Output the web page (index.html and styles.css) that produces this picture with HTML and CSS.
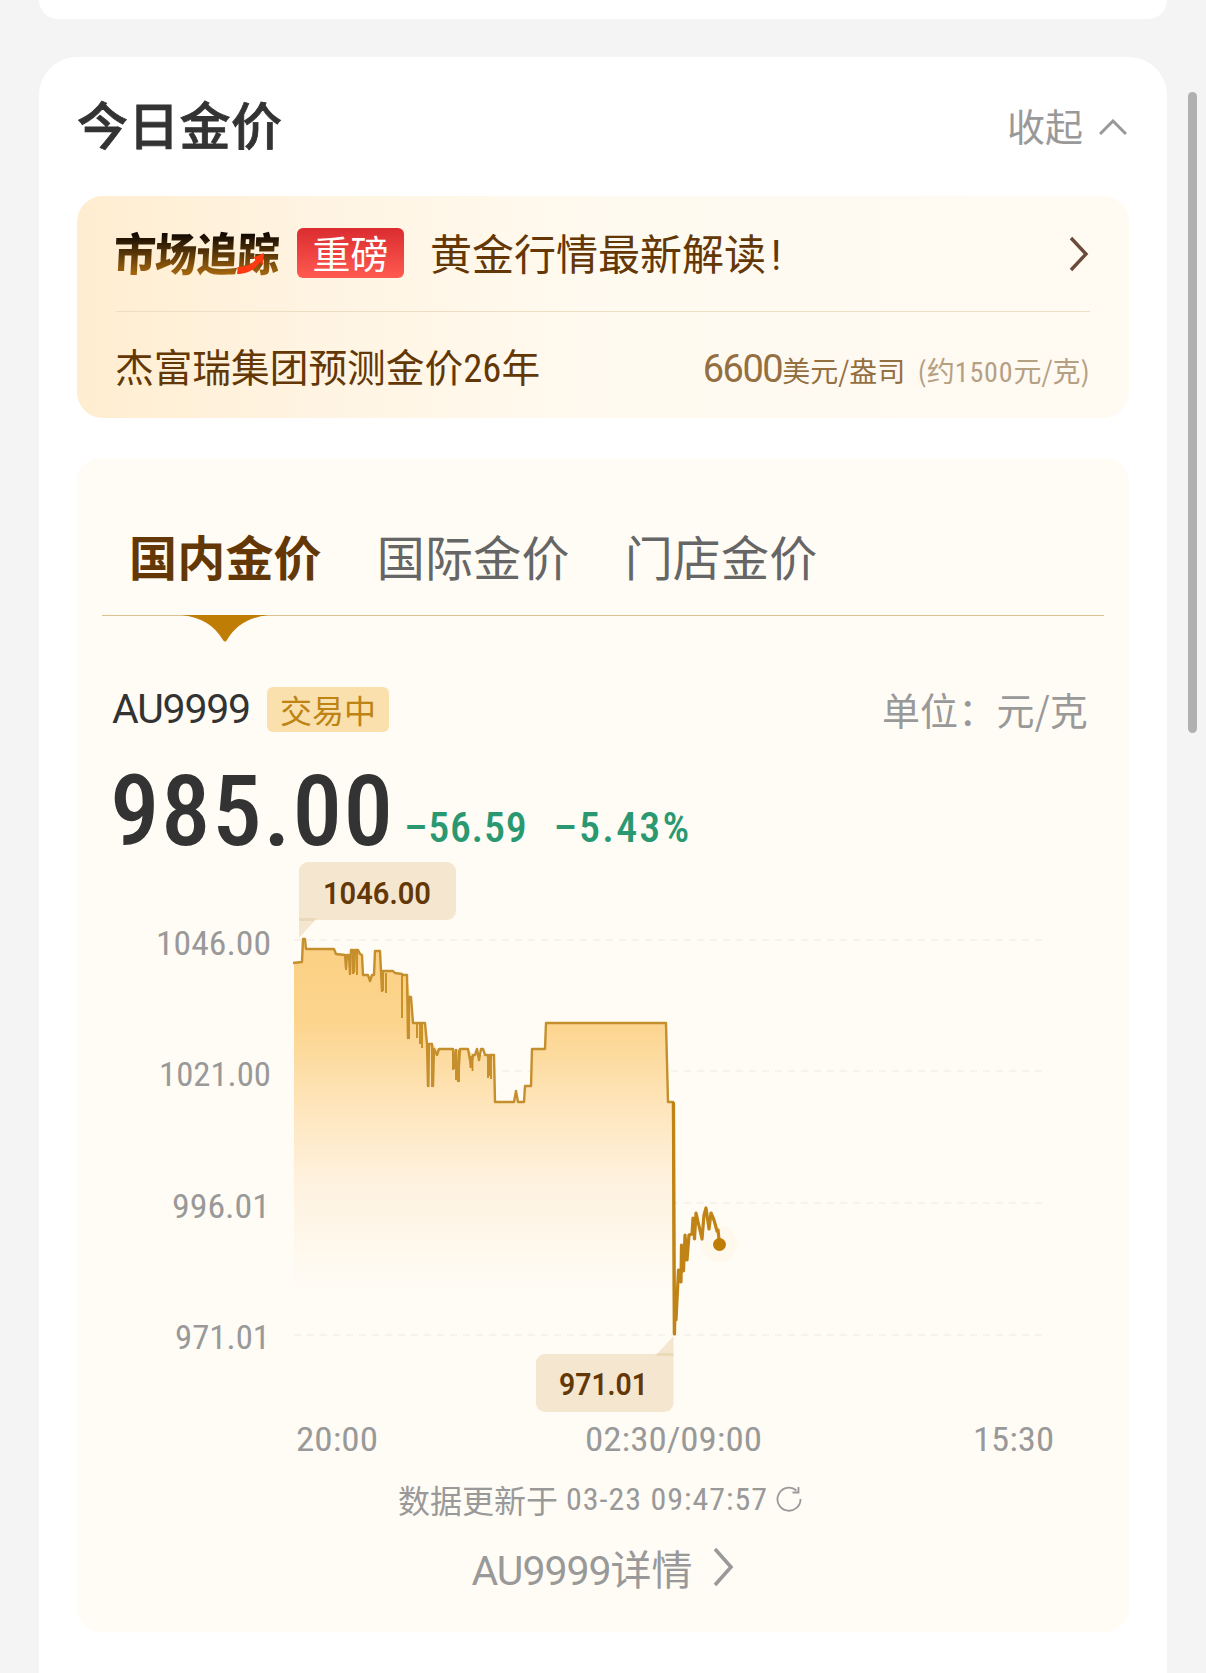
FILE: index.html
```html
<!DOCTYPE html>
<html lang="zh-CN">
<head>
  <meta charset="UTF-8" />
  <meta name="viewport" content="width=device-width, initial-scale=1.0" />
  <title>今日金价</title>
  <link rel="stylesheet" href="styles.css">
</head>
<body>
  <div class="prev-card"></div>
  <div class="card">
    <div class="card-head">
      <h2>今日金价</h2>
      <div class="fold">
        <span>收起</span>
        <svg width="28" height="16" viewBox="0 0 28 16" fill="none" stroke="#999" stroke-width="3"><path d="M1 15L14 2l13 13"/></svg>
      </div>
    </div>

    <div class="news">
      <div class="news-top">
        <div class="logo">
          <span class="logo-text">市场追踪</span>
          <svg class="logo-arrow" width="28" height="22" viewBox="0 0 28 22"><path d="M1 14C9 14 16 11 19 6l-4-1L27 0l-1 12-3-3C18 17 10 21 0 21z" fill="#ff3a12"/></svg>
        </div>
        <span class="hot">重磅</span>
        <span class="news-title">黄金行情最新解读<span class="num">!</span></span>
        <svg class="news-more" width="20" height="36" viewBox="0 0 20 36" fill="none" stroke="#6b4a3a" stroke-width="3.4"><path d="M2 2l15 16L2 34"/></svg>
      </div>
      <div class="news-bottom">
        <span class="forecast">杰富瑞集团预测金价<span class="num">26</span>年</span>
        <span class="target"><span class="num">6600</span>美元/盎司</span>
        <span class="approx">(约<span class="num">1500</span>元/克)</span>
      </div>
    </div>

    <div class="panel">
      <div class="tabs">
        <span class="tab active">国内金价</span>
        <span class="tab">国际金价</span>
        <span class="tab">门店金价</span>
        <svg class="notch" width="86" height="27" viewBox="0 0 86 27"><path d="M0 0h86C66 3 54 10 45 25q-2 3-4 0C32 10 20 3 0 0z" fill="#bf7d06"/></svg>
      </div>
      <div class="symbol-row">
        <span class="symbol num">AU9999</span>
        <span class="status">交易中</span>
        <span class="unit">单位：元/克</span>
      </div>
      <div class="price-row">
        <span class="price num">985.00</span>
        <span class="change num">–56.59</span>
        <span class="change percent num">–5.43%</span>
      </div>

      <svg class="chart" width="1052" height="604" viewBox="77 856 1052 604">
        <defs>
          <linearGradient id="area" gradientUnits="userSpaceOnUse" x1="0" y1="940" x2="0" y2="1290">
            <stop offset="0" stop-color="#fbd084"/>
            <stop offset="0.23" stop-color="#fcd48c"/>
            <stop offset="0.49" stop-color="#fee6be"/>
            <stop offset="0.7" stop-color="#fef2e0"/>
            <stop offset="1" stop-color="#fffcf5"/>
          </linearGradient>
        </defs>
        <g class="grid">
          <path d="M294 940H1046"/>
          <path d="M294 1071H1046"/>
          <path d="M294 1203H1046"/>
          <path d="M294 1335H1046"/>
        </g>
        <path class="area" d="M294 963H302L303.500 939L306 949H334L336 954H351V950H358L362 955L363 975H368L370 980L374 975L375 951H380L382 971H393L395 973L402 975H407L410 996L413 1022H425L428 1043H432L437 1049H468L473 1055H494L495 1102H514L516 1091L518 1102H524L525 1086H531L532 1049H545L546 1023H666L668 1102H673L674 1290H294z"/>
        <!-- short intraday dips -->
        <path class="dips" d="M346 955V970M350 955V975M353 951V974M357 951V975M383 973V991M386 973V993M402 975V1018M409 998V1039M417 1024V1038M420 1024V1044M422 1024V1048M428.500 1045V1087M432 1045V1087M453 1050V1070M456 1050V1080M459 1050V1082M470.500 1056V1068M472.500 1056V1071M488 1056V1078M491 1056V1079"/>
        <path class="line" d="M293 963L302 962L303 939L305 939L306 949H334L336 954L345 955L346 968L347 955H349L350 974L351 950L353 950L354 972L355 950H358L360 954L362 955L363 975H368L370 981L372 975L374 975L375 951H380L382 991L383 971H393L395 973L402 974L403 975H407L408 1038L409 997H411L413 1023H425L427 1044L428 1086L429 1044H432L433 1086L434 1049L437 1055L439 1049H453L454 1068L456 1050L458 1081L460 1049H468L470 1060L471 1066L473 1055H475L477 1049L479 1060L481 1049H483L485 1055H488L489 1075L490 1055H494L495 1102H514L516 1091L518 1102H524L525 1086H531L532 1049H545L546 1023H666L668 1102H673L674 1334"/>
        <circle cx="719.500" cy="1244" r="18" fill="#fff6e8" fill-opacity=".6"/>
        <path class="line latest" d="M673.500 1102L674.500 1334L675 1305L676 1320L678.500 1270L681 1282L681.500 1245L683.500 1271L685 1235L687 1260L689 1235L692 1234L693 1218L694.500 1239L696 1213L699 1226L702 1239L704 1215L706 1208L709 1229L711 1213L714 1220L717 1231L718 1230L719.500 1244"/>
        <circle cx="719.500" cy="1244.500" r="6.500" fill="#bf7d06"/>

        <rect class="tip" x="299" y="862" width="157" height="58" rx="9"/>
        <path class="tip" d="M299 909V938L317 918z"/>
        <path d="M299 918h18l-3 3h-15z" fill="#ecd9ba"/>
        <text class="tip-text" x="323" y="904" textLength="108" lengthAdjust="spacingAndGlyphs">1046.00</text>
        <rect class="tip" x="536" y="1354" width="137.500" height="58" rx="9"/>
        <path class="tip" d="M673.500 1365V1336L655 1356z"/>
        <path d="M673.500 1356h-18.500l3-3h15.500z" fill="#ecd9ba"/>
        <text class="tip-text" x="559" y="1395" textLength="89" lengthAdjust="spacingAndGlyphs">971.01</text>

        <g class="axis">
          <text x="156" y="955" textLength="115" lengthAdjust="spacingAndGlyphs">1046.00</text>
          <text x="159" y="1086" textLength="112" lengthAdjust="spacingAndGlyphs">1021.00</text>
          <text x="172" y="1218" textLength="98" lengthAdjust="spacingAndGlyphs">996.01</text>
          <text x="175" y="1349" textLength="95" lengthAdjust="spacingAndGlyphs">971.01</text>
          <text x="296" y="1451" textLength="82" lengthAdjust="spacingAndGlyphs">20:00</text>
          <text x="585" y="1451" textLength="177" lengthAdjust="spacingAndGlyphs">02:30/09:00</text>
          <text x="973" y="1451" textLength="81" lengthAdjust="spacingAndGlyphs">15:30</text>
        </g>
      </svg>

      <div class="updated">
        <span>数据更新于</span>
        <span class="num">03-23 09:47:57</span>
        <svg width="26" height="26" viewBox="0 0 26 26" fill="none" stroke="#999" stroke-width="1.8"><path d="M24.500 13A11.500 11.500 0 1 1 20.500 4.500"/><path d="M22.500 1v5.500h-6"/></svg>
      </div>
      <div class="detail">
        <span><span class="num">AU9999</span>详情</span>
        <svg width="22" height="38" viewBox="0 0 22 38" fill="none" stroke="#999" stroke-width="3.600"><path d="M2 1l16 18L2 37"/></svg>
      </div>
    </div>
  </div>
  <div class="scrollbar"></div>
</body>
</html>
```
FILE: styles.css
```css
* {
  margin: 0;
  padding: 0;
  box-sizing: border-box;
}

body {
  position: relative;
  height: 1673px;
  padding: 0 39px;
  background-color: #f4f4f4;
  font-family: "Noto Sans CJK SC", sans-serif;
  color: #333;
  overflow: hidden;
  white-space: nowrap;
}

.num {
  font-family: Roboto, sans-serif;
  font-stretch: 87%;
}

.prev-card {
  height: 19px;
  background-color: #fff;
  border-radius: 0 0 24px 24px;
}

.card {
  margin-top: 38px;
  height: 1640px;
  padding: 0 38px;
  background-color: #fff;
  border-radius: 38px 38px 0 0;
}

.card-head {
  display: flex;
  justify-content: space-between;
  align-items: center;
  height: 139px;
  padding-right: 2px;
}

h2 {
  font-size: 51px;
  font-weight: 500;
  line-height: 60px;
  letter-spacing: 0.3px;
  padding-bottom: 8px;
  -webkit-text-stroke: 0.8px #333;
}

.fold {
  display: flex;
  align-items: center;
  gap: 16px;
  font-size: 38px;
  line-height: 44px;
  color: #999;
}

.fold span {
  padding-bottom: 3px;
}

.news {
  height: 222px;
  padding: 0 39px;
  border-radius: 26px;
  background: linear-gradient(90deg, #ffedd0 0, #fff4e2 22%, #fffaf0 50%, #fffaf2 100%);
  color: #633806;
}

.news-top {
  display: flex;
  align-items: center;
  height: 116px;
  border-bottom: 1px solid #eedfc4;
}

.logo {
  position: relative;
  width: 181px;
  padding-bottom: 3px;
}

.logo-text {
  display: inline-block;
  margin-left: -2px;
  font-size: 42px;
  font-weight: 800;
  line-height: 54px;
  letter-spacing: -0.8px;
  transform: skewX(-3deg) scaleY(1.08);
  background: linear-gradient(#140a02 20%, #a8690e 90%);
  -webkit-background-clip: text;
  background-clip: text;
  color: transparent;
}

.logo-arrow {
  position: absolute;
  left: 121px;
  top: 28px;
}

.hot {
  width: 107px;
  height: 50px;
  margin-bottom: 2px;
  border-radius: 6px;
  background: linear-gradient(#db2c30, #ff5a50);
  color: #fff;
  font-size: 38px;
  line-height: 48px;
  text-align: center;
}

.news-title {
  margin-left: 26px;
  font-size: 42px;
  line-height: 50px;
}

.news-title .num {
  margin-left: 5px;
}

.news-more {
  margin-left: auto;
  margin-right: 1px;
}

.news-bottom {
  display: flex;
  align-items: baseline;
  padding-top: 25px;
  line-height: 56px;
}

.forecast {
  margin-left: -1px;
  font-size: 38.700px;
}

.target {
  margin-left: auto;
  font-size: 28px;
  color: #946f42;
}

.target .num {
  font-size: 38px;
  font-stretch: 100%;
  letter-spacing: -1.5px;
}

.approx {
  margin-left: 12px;
  font-size: 28px;
  color: #b5a084;
}

.approx .num {
  letter-spacing: 0.9px;
}

.panel {
  margin-top: 40px;
  height: 1174px;
  border-radius: 24px;
  background-color: #fffcf5;
}

.tabs {
  position: relative;
  display: flex;
  gap: 55px;
  height: 158px;
  margin: 0 25px;
  padding: 67px 0 0 27px;
  border-bottom: 1px solid #d9c28f;
}

.tab {
  font-size: 48px;
  line-height: 60px;
  letter-spacing: 0.2px;
  color: #666;
}

.tab.active {
  font-weight: 700;
  color: #633806;
}

.notch {
  position: absolute;
  left: 80px;
  top: 157px;
}

.symbol-row {
  display: flex;
  align-items: center;
  height: 46px;
  margin: 70px 41px 0 35px;
}

.symbol {
  width: 138px;
  padding-bottom: 1px;
  font-size: 41px;
  font-stretch: 100%;
  letter-spacing: -1.2px;
}

.status {
  width: 122px;
  height: 45px;
  margin-left: 17px;
  border-radius: 6px;
  background-color: #fae0ac;
  color: #bd8313;
  font-size: 32px;
  line-height: 45px;
  text-align: center;
}

.unit {
  margin-left: auto;
  padding-bottom: 2px;
  font-size: 38px;
  letter-spacing: 0.2px;
  color: #999;
}

.price-row {
  display: flex;
  align-items: baseline;
  height: 124px;
  padding-left: 33px;
}

.price {
  width: 280px;
  font-size: 99px;
  font-weight: 500;
  line-height: 158px;
  letter-spacing: 1.6px;
}

.change {
  margin-left: 14px;
  font-size: 42px;
  font-weight: 500;
  letter-spacing: 0.7px;
  color: #2a9971;
  transform: translateY(-3px);
}

.change.percent {
  margin-left: 26px;
  letter-spacing: 2.2px;
}

.chart {
  display: block;
}

.grid path {
  stroke: #f2efe9;
  stroke-width: 1.5;
  stroke-dasharray: 7 6;
}

.area {
  fill: url(#area);
}

.line {
  fill: none;
  stroke: #c48f2c;
  stroke-width: 2.4;
  stroke-linejoin: round;
}

.line.latest {
  stroke: #c08315;
  stroke-width: 3.2;
}

.dips {
  fill: none;
  stroke: #c58a1c;
  stroke-width: 1.8;
}

.tip {
  fill: #f5e6d0;
}

.tip-text {
  font: 600 31px Roboto, sans-serif;
  fill: #633806;
}

.axis {
  font: 400 34px Roboto, sans-serif;
  font-stretch: 87%;
  fill: #999;
}

.updated {
  display: flex;
  justify-content: center;
  align-items: center;
  gap: 8px;
  height: 77px;
  padding-right: 6px;
  font-size: 32px;
  color: #999;
}

.updated .num {
  letter-spacing: 1px;
}

.detail {
  display: flex;
  justify-content: center;
  align-items: center;
  gap: 20px;
  height: 60px;
  font-size: 41px;
  color: #999;
}

.detail .num {
  font-stretch: 100%;
  letter-spacing: -1px;
}

.scrollbar {
  position: absolute;
  left: 1188px;
  top: 92px;
  width: 9px;
  height: 641px;
  border-radius: 5px;
  background-color: #b0b0b0;
}
```
